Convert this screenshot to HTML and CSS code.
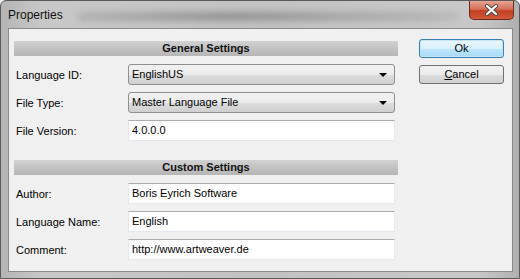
FILE: index.html
```html
<!DOCTYPE html>
<html>
<head>
<title>Properties</title>
<link rel="stylesheet" href="styles.css">
</head>
<body>

<div class="window">

  <div class="titlebar">
    <span class="title">Properties</span>
    <span class="blur"></span>
    <div class="close">
      <svg width="15" height="12" viewBox="0 0 15 12">
        <path d="M3 2 L12 10 M12 2 L3 10" stroke="#4a4a4a" stroke-width="4" stroke-linecap="round"/>
        <path d="M3 2 L12 10 M12 2 L3 10" stroke="#fff" stroke-width="2.2" stroke-linecap="round"/>
      </svg>
    </div>
  </div>

  <div class="client">

    <div class="form">

      <div class="section">General Settings</div>

      <div class="row">
        <label>Language ID:</label>
        <div class="combo">EnglishUS<span class="arrow"></span></div>
      </div>
      <div class="row">
        <label>File Type:</label>
        <div class="combo">Master Language File<span class="arrow"></span></div>
      </div>
      <div class="row">
        <label>File Version:</label>
        <div class="edit">4.0.0.0</div>
      </div>

      <div class="section second">Custom Settings</div>

      <div class="row">
        <label>Author:</label>
        <div class="edit">Boris Eyrich Software</div>
      </div>
      <div class="row">
        <label>Language Name:</label>
        <div class="edit">English</div>
      </div>
      <div class="row">
        <label>Comment:</label>
        <div class="edit">http://www.artweaver.de</div>
      </div>

    </div>

    <div class="buttons">
      <div class="button default">Ok</div>
      <div class="button"><u>C</u>ancel</div>
    </div>

  </div>

</div>

</body>
</html>
```

FILE: styles.css
```css
body { margin: 0; font-family: "Liberation Sans", Arial, sans-serif; font-size: 11px; color: #000; }

.window { box-sizing: border-box; width: 520px; height: 279px; border: 1px solid #5a5a5a; border-radius: 6px 6px 0 0;
  background: linear-gradient(90deg, #b4b4b4 0%, #c8c8c8 8%, #c2c2c2 50%, #c8c8c8 92%, #b0b0b0 100%);
  padding: 0 6px 6px 7px; display: flex; flex-direction: column; }

.titlebar { height: 27px; display: flex; align-items: flex-start; position: relative; }
.title { font-size: 12px; padding-top: 7px; color: #111; }
.blur { flex: 1; height: 9px; margin: 11px 10px 0 14px; border-radius: 6px;
  background: linear-gradient(90deg, rgba(100,100,100,0.2), rgba(90,90,90,0.45) 40%, rgba(100,100,100,0.3) 70%, rgba(110,110,110,0.15)); filter: blur(3px); }
.close { width: 45px; height: 19px; margin-right: -1px; box-sizing: border-box; border: 1px solid #6e2a20; border-top: none;
  border-radius: 0 0 5px 5px; display: flex; align-items: center; justify-content: center;
  background: linear-gradient(#e8a493 0%, #d4705a 45%, #c13f22 55%, #cf5a38 100%); }

.client { flex: 1; background: #f0f0f0; border: 1px solid #8a8a8a; display: flex; padding: 10px 0 0 5px; }

.form { width: 384px; padding-top: 2px; }

.section { height: 15px; line-height: 15px; text-align: center; font-weight: bold; margin-bottom: 8px;
  background: linear-gradient(#d2d2d2, #c2c2c2 50%, #b6b6b6); color: #111; }
.section.second { margin-top: 19px; }

.row { height: 21px; display: flex; align-items: center; margin-bottom: 7px; }
.row label { width: 112px; padding-left: 2px; }

.combo { position: relative; box-sizing: border-box; width: 267px; height: 21px; border: 1px solid #8e8f8f; border-radius: 3px;
  background: linear-gradient(#f2f2f2, #ebebeb 50%, #dddddd 51%, #cfcfcf); padding-left: 3px; line-height: 19px; }
.arrow { position: absolute; right: 7px; top: 8px; border-left: 4px solid transparent; border-right: 4px solid transparent;
  border-top: 4px solid #000; }

.edit { box-sizing: border-box; width: 267px; height: 21px; background: #fff; border: 1px solid #e3e9ef; border-top-color: #abadb3;
  padding-left: 3px; line-height: 19px; }

.buttons { margin-left: 21px; display: flex; flex-direction: column; gap: 7px; }
.button { box-sizing: border-box; width: 85px; height: 19px; border: 1px solid #707070; border-radius: 3px; text-align: center;
  line-height: 17px; background: linear-gradient(#f2f2f2, #ebebeb 50%, #dddddd 51%, #cfcfcf); }
.button.default { border-color: #3c7fb1; background: linear-gradient(#eaf6fd, #d9f0fc 50%, #bee6fd 51%, #a7d9f5);
  box-shadow: inset 0 0 0 1px #c4e5f6; }
```
